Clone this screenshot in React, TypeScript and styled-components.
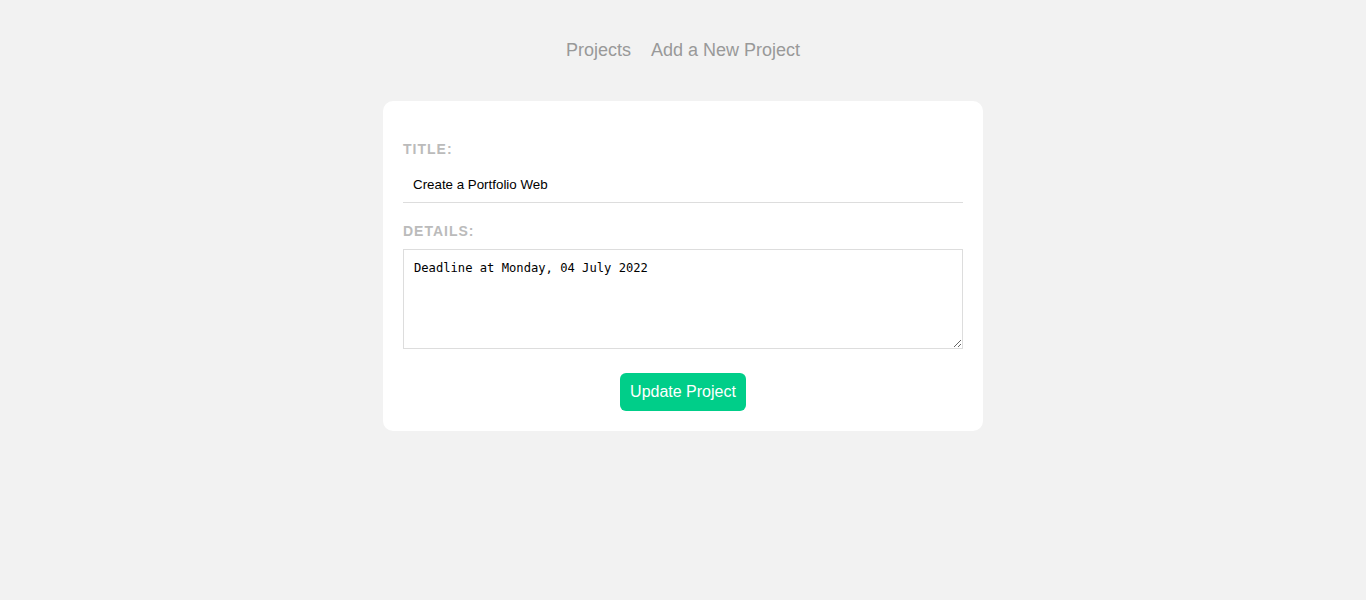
import React from "react";
import styled, { createGlobalStyle } from "styled-components";

const Global = createGlobalStyle`
  html, body { margin: 0; padding: 0; background: #f2f2f2; }
  body { font-family: "Liberation Sans", Arial, sans-serif; }
  * { box-sizing: border-box; }
`;

const Nav = styled.nav`
  text-align: center;
  margin: 40px auto;
`;

const NavLink = styled.a`
  color: #999;
  margin: 10px;
  text-decoration: none;
  font-size: 18px;
  font-family: "Liberation Sans", Arial, sans-serif;
`;

const Form = styled.form`
  background: #fff;
  padding: 20px;
  border-radius: 10px;
  max-width: 600px;
  margin: 0 auto;
`;

const Label = styled.label`
  display: block;
  color: #bbb;
  text-transform: uppercase;
  font-size: 14px;
  font-weight: bold;
  letter-spacing: 1px;
  margin: 20px 0 10px;
  font-family: "Liberation Sans", Arial, sans-serif;
`;

const Input = styled.input`
  display: block;
  width: 100%;
  padding: 10px;
  border: 0;
  border-bottom: 1px solid #ddd;
  font-family: "Liberation Sans", Arial, sans-serif;
  font-size: 13.33px;
  color: #000;
  outline: none;
`;

const TextArea = styled.textarea`
  width: 100%;
  height: 100px;
  padding: 10px;
  border: 1px solid #ddd;
  font-family: "DejaVu Sans Mono", "Liberation Mono", monospace;
  font-size: 12.15px;
  line-height: 16px;
  color: #000;
  outline: none;
`;

const Button = styled.button`
  display: block;
  margin: 20px auto 0;
  background: #00ce89;
  color: #fff;
  padding: 10px;
  border: 0;
  border-radius: 6px;
  font-size: 16px;
  font-family: "Liberation Sans", Arial, sans-serif;
  cursor: pointer;
`;

export default function App() {
  return (
    <>
      <Global />
      <Nav>
        <NavLink href="#">Projects</NavLink>
        <NavLink href="#">Add a New Project</NavLink>
      </Nav>
      <Form onSubmit={(e) => e.preventDefault()}>
        <Label>Title:</Label>
        <Input type="text" defaultValue="Create a Portfolio Web" />
        <Label>Details:</Label>
        <TextArea defaultValue="Deadline at Monday, 04 July 2022" />
        <Button>Update Project</Button>
      </Form>
    </>
  );
}
